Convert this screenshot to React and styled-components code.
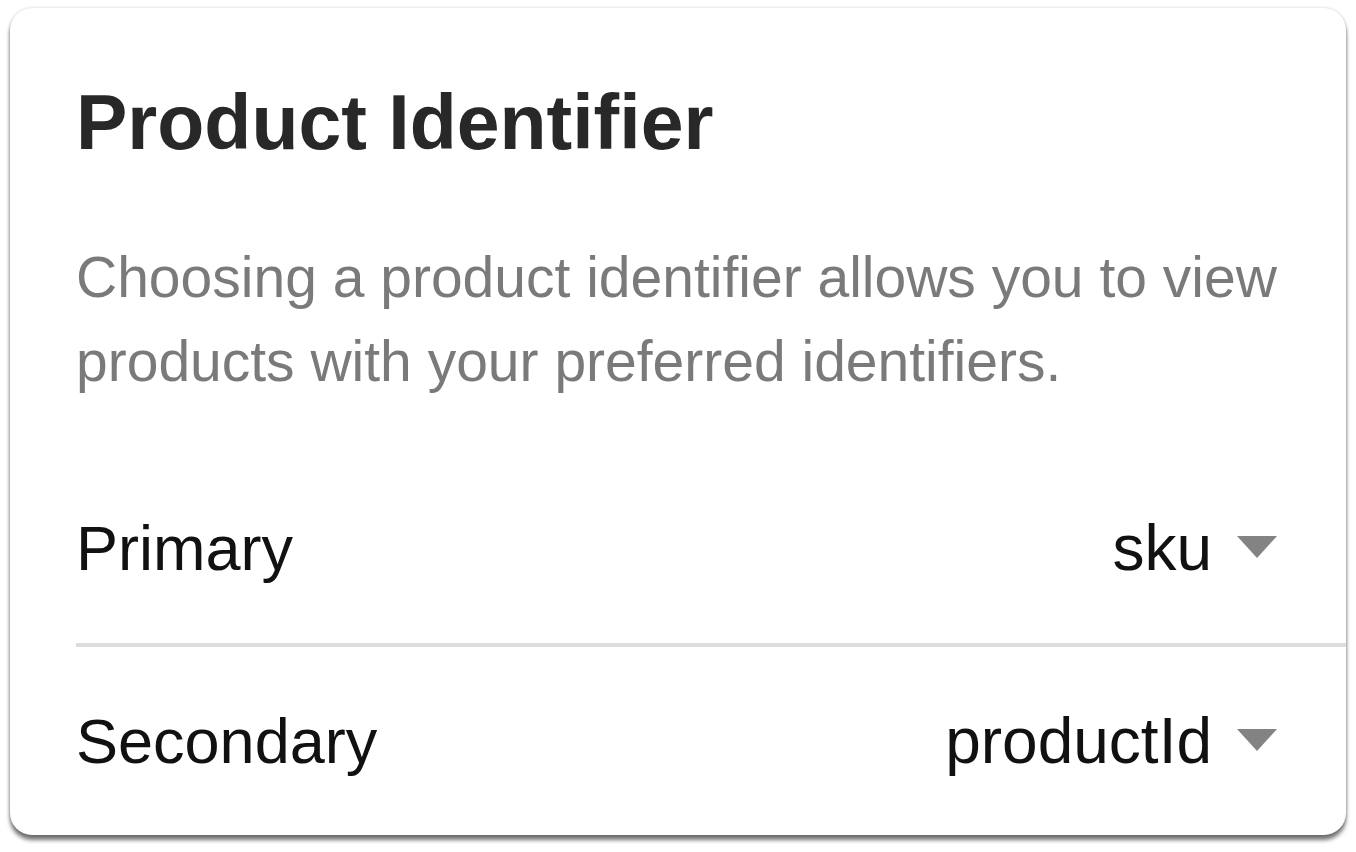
import React from 'react';
import styled, { createGlobalStyle } from 'styled-components';

const GlobalStyle = createGlobalStyle`
  html, body {
    margin: 0;
    background: #ffffff;
    font-family: "Liberation Sans", Arial, sans-serif;
  }
`;

const identifiers = [
  { label: 'Primary', value: 'sku' },
  { label: 'Secondary', value: 'productId' },
];

function App() {
  return (
    <>
      <GlobalStyle />
      <Page>
        <Card>
          <Header>
            <Title>Product Identifier</Title>
            <Description>
              Choosing a product identifier allows you to view products with your preferred identifiers.
            </Description>
          </Header>
          <List>
            {identifiers.map((item, i) => (
              <Row key={item.label} divided={i > 0}>
                <Label>{item.label}</Label>
                <Picker>
                  <Value>{item.value}</Value>
                  <Caret viewBox="0 0 40 22">
                    <path d="M0 0 H40 L20 22 Z" fill="#838383" />
                  </Caret>
                </Picker>
              </Row>
            ))}
          </List>
        </Card>
      </Page>
    </>
  );
}

const Page = styled.div`
  min-height: 852px;
  box-sizing: border-box;
  padding: 8px 10px 17px 10px;
`;

const Card = styled.section`
  height: 827px;
  box-sizing: border-box;
  background: #fff;
  border-radius: 22px;
  box-shadow: 0 5px 4px rgba(0, 0, 0, 0.55), 0 0 3px rgba(0, 0, 0, 0.2);
  padding-left: 66px;
  overflow: hidden;
  display: flex;
  flex-direction: column;
`;

const Header = styled.div`
  padding: 76px 60px 0 0;
`;

const Title = styled.h1`
  margin: 0;
  font-size: 77px;
  line-height: 77px;
  font-weight: 700;
  color: #282828;
`;

const Description = styled.p`
  margin: 74px 0 0 0;
  font-size: 57px;
  line-height: 84px;
  color: #7a7a7a;
`;

const List = styled.div`
  margin-top: 51px;
  flex: 1;
  display: flex;
  flex-direction: column;
`;

const Row = styled.div`
  flex: 1;
  display: flex;
  align-items: center;
  justify-content: space-between;
  padding-right: 69px;
  border-top: ${(p) => (p.divided ? '4px solid #dddddd' : 'none')};
`;

const Label = styled.span`
  font-size: 63px;
  color: #111;
`;

const Picker = styled.div`
  display: flex;
  align-items: center;
  gap: 25px;
`;

const Value = styled.span`
  font-size: 64px;
  color: #111;
`;

const Caret = styled.svg`
  width: 40px;
  height: 22px;
  margin-top: -2px;
`;

export default App;
